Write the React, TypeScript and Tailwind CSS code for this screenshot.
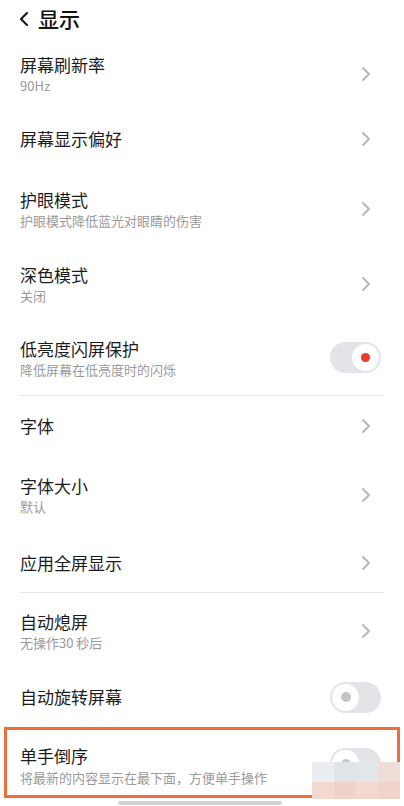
import React from 'react';

type Row = {
  title: string;
  sub?: string;
  kind: 'arrow' | 'on' | 'off';
  h: string;
};

const Chevron = () => (
  <svg width="10" height="16" viewBox="0 0 10 16" className="shrink-0">
    <polyline points="2,2 8,8 2,14" fill="none" stroke="#b4b4bc" strokeWidth="1.8" strokeLinecap="round" strokeLinejoin="round" />
  </svg>
);

const Toggle = ({ on }: { on: boolean }) =>
  on ? (
    <div className="w-[51px] h-[31px] rounded-full bg-[#e3e3e8] flex items-center justify-end pr-[2px] shrink-0">
      <div className="w-[27px] h-[27px] rounded-full bg-white flex items-center justify-center">
        <div className="w-[9px] h-[9px] rounded-full bg-[#e8392a]" />
      </div>
    </div>
  ) : (
    <div className="w-[51px] h-[31px] rounded-full bg-[#e3e3e8] flex items-center pl-[2px] shrink-0">
      <div className="w-[27px] h-[27px] rounded-full bg-white flex items-center justify-center">
        <div className="w-[10px] h-[10px] rounded-full bg-[#c4c4ca]" />
      </div>
    </div>
  );

const SettingRow = ({ row }: { row: Row }) => (
  <div className={`flex items-center justify-between pl-5 ${row.kind === 'arrow' ? 'pr-[33px]' : 'pr-[23px]'} ${row.h}`}>
    <div className="flex flex-col">
      <span className="text-[17px] leading-[24px] text-[#1c1c1c]">{row.title}</span>
      {row.sub && <span className="text-[13px] leading-[18px] text-[#9a9a9a]">{row.sub}</span>}
    </div>
    {row.kind === 'arrow' ? <Chevron /> : <Toggle on={row.kind === 'on'} />}
  </div>
);

const groupA: Row[] = [
  { title: '屏幕刷新率', sub: '90Hz', kind: 'arrow', h: 'h-[68px]' },
  { title: '屏幕显示偏好', kind: 'arrow', h: 'h-[62px]' },
  { title: '护眼模式', sub: '护眼模式降低蓝光对眼睛的伤害', kind: 'arrow', h: 'h-[78px]' },
  { title: '深色模式', sub: '关闭', kind: 'arrow', h: 'h-[72px]' },
  { title: '低亮度闪屏保护', sub: '降低屏幕在低亮度时的闪烁', kind: 'on', h: 'h-[75px]' },
];

const groupB: Row[] = [
  { title: '字体', kind: 'arrow', h: 'h-[60px]' },
  { title: '字体大小', sub: '默认', kind: 'arrow', h: 'h-[78px]' },
  { title: '应用全屏显示', kind: 'arrow', h: 'h-[58px]' },
];

const groupC: Row[] = [
  { title: '自动熄屏', sub: '无操作30 秒后', kind: 'arrow', h: 'h-[76px]' },
  { title: '自动旋转屏幕', kind: 'off', h: 'h-[56px]' },
];

export default function App() {
  return (
    <div
      className="w-[404px] h-[806px] bg-white overflow-hidden relative"
      style={{ fontFamily: '"Noto Sans CJK SC", "Noto Sans", sans-serif' }}
    >
      {/* header */}
      <div className="h-[40px] flex items-center pl-[19px] gap-[9px] pb-[3px]">
        <svg width="10" height="16" viewBox="0 0 10 16">
          <polyline points="8,2 2,8 8,14" fill="none" stroke="#1a1a1a" strokeWidth="2.2" strokeLinecap="round" strokeLinejoin="round" />
        </svg>
        <span className="text-[21px] font-medium text-[#111] leading-none">显示</span>
      </div>

      {groupA.map((r) => (
        <SettingRow key={r.title} row={r} />
      ))}
      <div className="mx-5 h-px bg-[#e6e6e6]" />
      {groupB.map((r) => (
        <SettingRow key={r.title} row={r} />
      ))}
      <div className="mx-5 h-px bg-[#e6e6e6]" />
      {groupC.map((r) => (
        <SettingRow key={r.title} row={r} />
      ))}

      {/* highlighted row */}
      <div className="mt-[2px] mx-[4px] h-[71px] border-[3px] border-[#f26c3c] flex items-center justify-between pl-[13px] pr-[16px] relative">
        <div className="flex flex-col pt-[6px]">
          <span className="text-[17px] leading-[24px] text-[#1c1c1c]">单手倒序</span>
          <span className="text-[13px] leading-[20px] text-[#9a9a9a]">将最新的内容显示在最下面，方便单手操作</span>
        </div>
        <div className="pt-[2px]">
          <Toggle on={false} />
        </div>
        {/* mosaic overlay */}
        <div className="absolute right-[-3px] top-[32px] grid grid-cols-4 w-[88px]">
          <div className="h-[20px] bg-[#eaeef1]" />
          <div className="h-[20px] bg-[#dfe4e8]" />
          <div className="h-[20px] bg-[#e2e6e9]" />
          <div className="h-[20px] bg-[#f0ddd6]" />
          <div className="h-[17px] bg-[#f3d9cf]" />
          <div className="h-[17px] bg-[#efd3c9]" />
          <div className="h-[17px] bg-[#f2d8cf]" />
          <div className="h-[17px] bg-[#f0d4ca]" />
        </div>
      </div>

      {/* home indicator */}
      <div className="absolute bottom-[1px] left-[118px] w-[164px] h-[4px] rounded-full bg-[#d2d2d2]" />
    </div>
  );
}
